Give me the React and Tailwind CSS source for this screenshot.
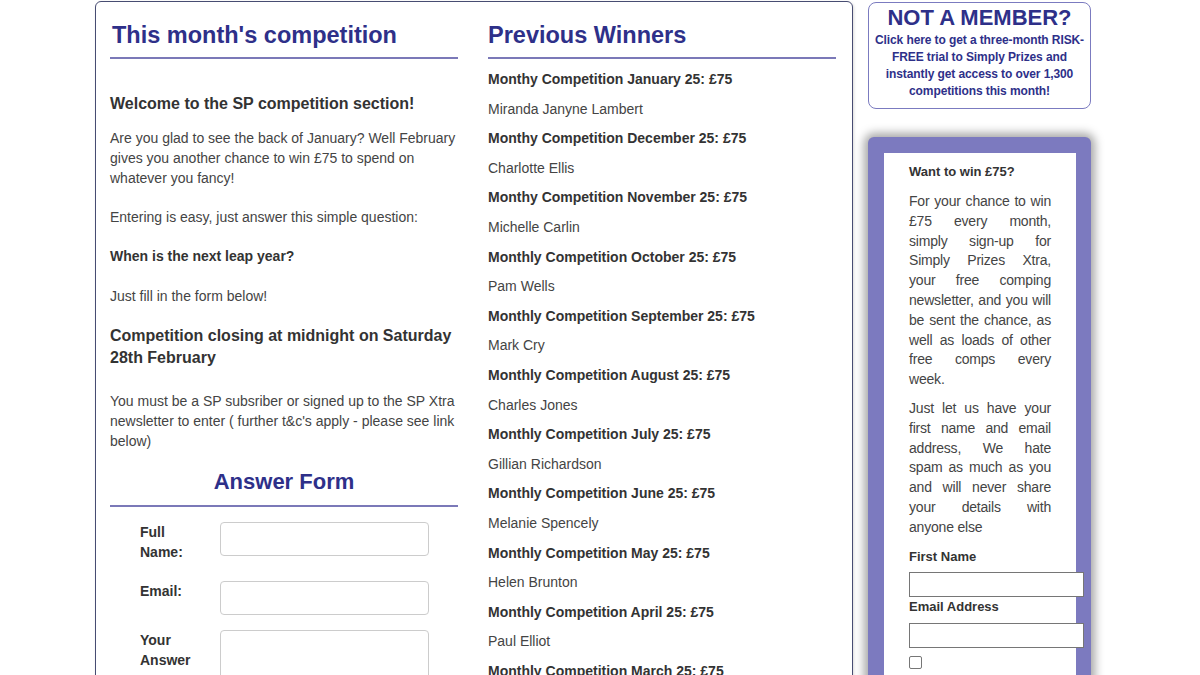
import React from "react";

const winners = [
  ["Monthy Competition January 25: £75", "Miranda Janyne Lambert"],
  ["Monthy Competition December 25: £75", "Charlotte Ellis"],
  ["Monthy Competition November 25: £75", "Michelle Carlin"],
  ["Monthly Competition October 25: £75", "Pam Wells"],
  ["Monthly Competition September 25: £75", "Mark Cry"],
  ["Monthly Competition August 25: £75", "Charles Jones"],
  ["Monthly Competition July 25: £75", "Gillian Richardson"],
  ["Monthly Competition June 25: £75", "Melanie Spencely"],
  ["Monthly Competition May 25: £75", "Helen Brunton"],
  ["Monthly Competition April 25: £75", "Paul Elliot"],
  ["Monthly Competition March 25: £75", "Sarah Thomas"],
];

export default function App() {
  return (
    <div
      className="w-[1200px] h-[675px] overflow-hidden bg-white flex items-start pl-[95px] pt-[1px] text-[#444]"
      style={{ fontFamily: '"Liberation Sans", Arial, sans-serif' }}
    >
      {/* main box */}
      <div className="w-[758px] h-[720px] shrink-0 border border-[#474c72] rounded-[6px] shadow-[1px_1px_3px_rgba(0,0,0,0.15)] flex pl-[14px] pr-[15px] gap-[30px]">
        {/* left column */}
        <div className="w-[348px] shrink-0">
          <h2 className="mt-[19px] pl-[2px] text-[23.5px] leading-[29px] font-bold text-[#2e3089] pb-[7px] border-b-2 border-[#7b79b8]">
            This month's competition
          </h2>
          <p className="mt-[35px] text-[16px] leading-[20px] font-bold text-[#333]">
            Welcome to the SP competition section!
          </p>
          <p className="mt-[14px] text-[14px] leading-[20px]">
            Are you glad to see the back of January? Well February gives you another chance to win £75 to spend on whatever you fancy!
          </p>
          <p className="mt-[19px] text-[14px] leading-[20px]">
            Entering is easy, just answer this simple question:
          </p>
          <p className="mt-[19px] text-[14px] leading-[20px] font-bold text-[#333]">
            When is the next leap year?
          </p>
          <p className="mt-[20px] text-[14px] leading-[20px]">Just fill in the form below!</p>
          <p className="mt-[19px] text-[16px] leading-[22px] font-bold text-[#333]">
            Competition closing at midnight on Saturday 28th February
          </p>
          <p className="mt-[22px] text-[14px] leading-[20px]">
            You must be a SP subsriber or signed up to the SP Xtra newsletter to enter ( further t&amp;c's apply - please see link below)
          </p>
          <h2 className="mt-[18px] text-[22px] leading-[26px] font-bold text-[#2e3089] text-center pb-[10px] border-b-2 border-[#7b79b8]">
            Answer Form
          </h2>
          <div className="pl-[30px]">
            <div className="mt-[15px] flex">
              <div className="w-[80px] text-[14px] leading-[20px] font-bold text-[#333]">
                Full<br />Name:
              </div>
              <div className="w-[209px] h-[34px] border border-[#ccc] rounded-[4px]" />
            </div>
            <div className="mt-[19px] flex">
              <div className="w-[80px] text-[14px] leading-[20px] font-bold text-[#333]">Email:</div>
              <div className="w-[209px] h-[34px] border border-[#ccc] rounded-[4px]" />
            </div>
            <div className="mt-[15px] flex">
              <div className="w-[80px] text-[14px] leading-[20px] font-bold text-[#333]">
                Your<br />Answer
              </div>
              <div className="w-[209px] h-[80px] border border-[#ccc] rounded-[4px]" />
            </div>
          </div>
        </div>
        {/* middle column */}
        <div className="w-[348px] shrink-0">
          <h2 className="mt-[19px] text-[23.5px] leading-[29px] font-bold text-[#2e3089] pb-[7px] border-b-2 border-[#7b79b8]">
            Previous Winners
          </h2>
          <div className="mt-[10px] flex flex-col gap-[9.6px] text-[14px] leading-[20px]">
            {winners.map(([t, n]) => (
              <React.Fragment key={t}>
                <p className="font-bold text-[#333]">{t}</p>
                <p>{n}</p>
              </React.Fragment>
            ))}
          </div>
        </div>
      </div>

      {/* right sidebar */}
      <div className="w-[223px] shrink-0 ml-[15px] pt-[1px] flex flex-col">
        <div className="h-[107px] shrink-0 border border-[#7b7bc0] rounded-[8px] px-[2px] text-center text-[#2e3089]">
          <div className="mt-[3px] text-[22px] leading-[24px] font-bold">NOT A MEMBER?</div>
          <div className="mt-[2px] text-[12px] leading-[17px] font-bold tracking-[-0.1px]">
            Click here to get a three-month RISK-FREE trial to Simply Prizes and instantly get access to over 1,300 competitions this month!
          </div>
        </div>
        <div className="mt-[28px] h-[600px] shrink-0 bg-[#7c7abf] rounded-t-[6px] p-[16px] pr-[15px] shadow-[0_0_10px_4px_rgba(0,0,0,0.35)]">
          <div className="bg-white h-full px-[25px] pt-[11px]">
            <p className="text-[13px] leading-[16px] font-bold text-[#333]">Want to win £75?</p>
            <p className="mt-[12px] text-[14px] leading-[19.8px] text-justify tracking-[-0.2px]">
              For your chance to win £75 every month, simply sign-up for Simply Prizes Xtra, your free comping newsletter, and you will be sent the chance, as well as loads of other free comps every week.
            </p>
            <p className="mt-[9px] text-[14px] leading-[19.8px] text-justify tracking-[-0.2px]">
              Just let us have your first name and email address, We hate spam as much as you and will never share your details with anyone else
            </p>
            <p className="mt-[11px] text-[13px] leading-[16px] font-bold text-[#333]">First Name</p>
            <div className="mt-[7px] w-[175px] h-[25px] border border-[#767676] bg-white" />
            <p className="mt-[2px] text-[13px] leading-[16px] font-bold text-[#333]">Email Address</p>
            <div className="mt-[8px] w-[175px] h-[25px] border border-[#767676] bg-white" />
            <div className="mt-[8px] w-[13px] h-[13px] border border-[#767676] rounded-[2px]" />
          </div>
        </div>
      </div>
    </div>
  );
}
